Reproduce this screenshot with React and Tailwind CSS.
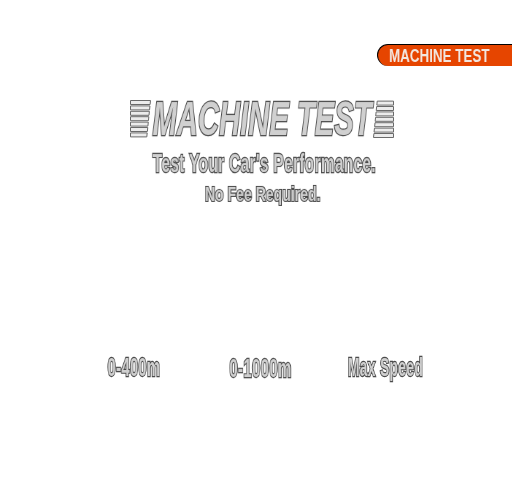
const outlined = "font-['Liberation_Sans',Arial,sans-serif] font-bold text-[#d0d0d0] [-webkit-text-stroke:2px_#4a4a4a] [paint-order:stroke_fill] whitespace-nowrap will-change-transform antialiased";

// striped end caps of the logo, slanted on the side facing the text
function Stripes({ flip }) {
  const rows = [0, 1, 2, 3, 4, 5, 6];
  return (
    <svg width="21" height="38" viewBox="0 0 21 38" className={`shrink-0 ${flip ? "-scale-100" : ""}`}>
      {rows.map((r) => {
        const y = r * 5.4 + 0.5;
        const top = 20.5 - r * 0.55;
        return (
          <polygon
            key={r}
            points={`0.5,${y} ${top},${y} ${top - 0.4},${y + 4} 0.5,${y + 4}`}
            fill="#ececec"
            stroke="#6a6a6a"
          />
        );
      })}
    </svg>
  );
}

function Stat({ children, className }) {
  return (
    <div className={`${outlined} text-center text-[22px] leading-[26px] tracking-[0.5px] scale-y-[1.15] ${className}`}>
      {children}
    </div>
  );
}

export default function App() {
  return (
    <div className="flex h-[504px] w-[512px] flex-col overflow-hidden bg-white">
      <div className="mt-[44px] flex h-[22px] w-[135px] items-center self-end rounded-l-[11px] border-t border-l border-black bg-[#e64500] pl-[11px]">
        <span className="origin-left scale-x-[0.705] font-['Liberation_Sans',Arial,sans-serif] text-[19px] leading-none font-bold whitespace-nowrap text-[#f2e6df] antialiased will-change-transform">
          MACHINE TEST
        </span>
      </div>

      <div className="mt-[34px] flex items-center justify-center pl-[12px]">
        <Stripes />
        <div className="flex w-[222px] justify-center">
          <span className={`${outlined} scale-x-[0.73] scale-y-[1.18] text-[40px] leading-[38px] italic`}>MACHINE TEST</span>
        </div>
        <Stripes flip />
      </div>

      <div className={`${outlined} mt-[13px] pl-[24px] text-center text-[22px] leading-[26px] tracking-[0.5px] scale-x-[0.7] scale-y-[1.15]`}>
        Test Your Car's Performance.
      </div>
      <div className={`${outlined} mt-[6px] pl-[18px] text-center text-[19px] leading-[22px] scale-x-[0.74] scale-y-[1.1]`}>
        No Fee Required.
      </div>

      <div className="mt-[150px] grid grid-cols-[128px_125px_123px] pl-[70px]">
        <Stat className="scale-x-[0.67]">0-400m</Stat>
        <Stat className="mt-[1px] scale-x-[0.68]">0-1000m</Stat>
        <Stat className="ml-[2px] scale-x-[0.63]">Max Speed</Stat>
      </div>
    </div>
  );
}
